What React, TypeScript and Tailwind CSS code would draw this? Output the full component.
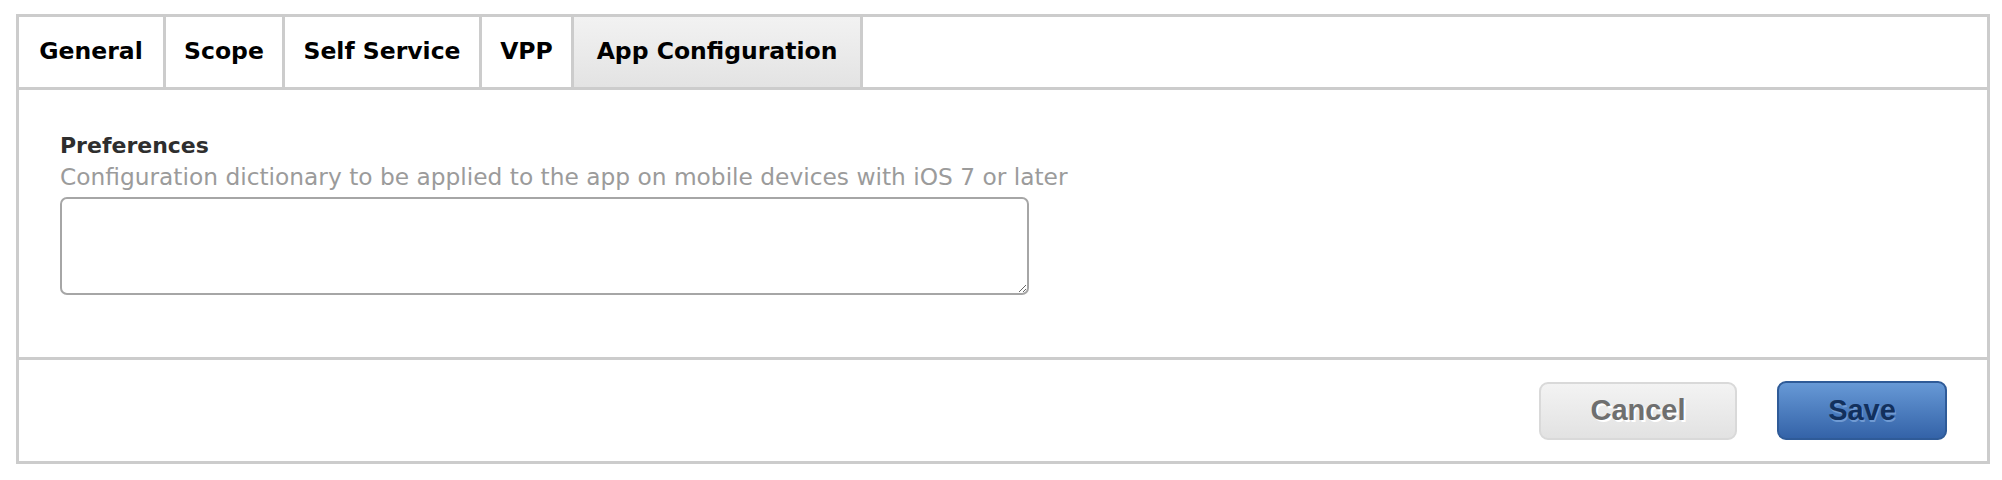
const tabs = [
    { label: 'General', width: 'w-[147px]' },
    { label: 'Scope', width: 'w-[119px]' },
    { label: 'Self Service', width: 'w-[197px]' },
    { label: 'VPP', width: 'w-[92px]' },
    { label: 'App Configuration', width: 'w-[289px]', active: true },
];

function TabBar() {
    return (
        <div className="flex h-[73px] border-b-[3px] border-[#cccccc]">
            {tabs.map((tab) => (
                <div
                    key={tab.label}
                    className={`${tab.width} flex items-center justify-center border-r-[3px] border-[#cccccc] text-[23.5px] font-bold text-black ${
                        tab.active ? 'bg-gradient-to-b from-[#f2f2f2] to-[#e3e3e3]' : 'bg-white'
                    }`}
                >
                    {tab.label}
                </div>
            ))}
        </div>
    );
}

export default function App() {
    return (
        <div className="min-h-[480px] bg-white pt-[14px] pl-[16px] font-['DejaVu_Sans',sans-serif]">
            <div className="w-[1974px] border-[3px] border-[#cccccc] bg-white">
                <TabBar />

                <div className="flex flex-col px-[41px] pt-[44px] pb-[62px] border-b-[3px] border-[#cccccc]">
                    <label className="text-[22px] leading-[24px] font-bold text-[#2e2e2e]">
                        Preferences
                    </label>
                    <span className="mt-[6px] text-[23.3px] leading-[26px] text-[#9b9b9b]">
                        Configuration dictionary to be applied to the app on mobile devices with iOS 7 or later
                    </span>
                    <textarea className="mt-[7px] w-[969px] h-[98px] rounded-[7px] border-2 border-[#a6a6a6] bg-white outline-none" />
                </div>

                <div className="flex h-[101px] items-center justify-end gap-[40px] pr-[40px] font-['Liberation_Sans',Arial,sans-serif]">
                    <button className="w-[198px] h-[58px] rounded-[9px] border-2 border-[#d9d9d9] bg-gradient-to-b from-[#f3f3f3] to-[#e2e2e2] text-[29px] font-bold text-[#6f6f6f] [text-shadow:2px_2px_0_#ffffff]">
                        Cancel
                    </button>
                    <button className="w-[170px] h-[59px] rounded-[9px] border-2 border-[#2f5b98] bg-gradient-to-b from-[#6799d6] to-[#3463a8] text-[29px] font-bold text-[#12305d] [text-shadow:1px_2px_0_#6f9ad3]">
                        Save
                    </button>
                </div>
            </div>
        </div>
    );
}
